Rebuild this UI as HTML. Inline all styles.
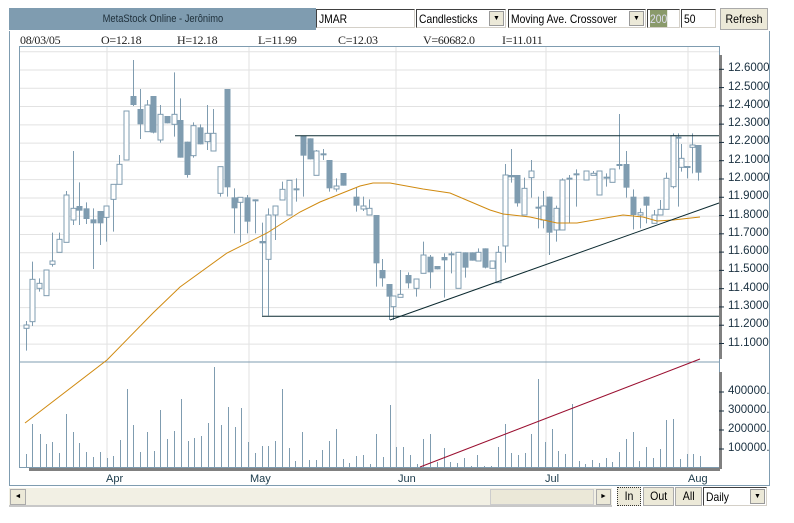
<!DOCTYPE html>
<html><head><meta charset="utf-8"><style>
body{margin:0;width:794px;height:523px;overflow:hidden;background:#fff;font-family:"Liberation Sans",sans-serif;position:relative}
.abs{position:absolute}
.hdr{left:9px;top:8px;width:307px;height:22px;background:#7f9cb0;color:#1e2f3a;font-size:11px;line-height:22px;text-align:center}
.hdr span{display:inline-block;transform:scaleX(.85)}
.inp{top:9px;height:19px;background:#fff;border-top:1px solid #404040;border-left:1px solid #404040;border-bottom:1px solid #d4d0c8;border-right:1px solid #d4d0c8;font-size:12px;line-height:19px;padding-left:2px;box-sizing:border-box;color:#000;overflow:hidden;white-space:nowrap}
.inp span.t{display:inline-block;transform:scaleX(.86);transform-origin:left}
.sel .ar{position:absolute;right:1px;top:1px;width:15px;height:15px;background:#ece9d8;border:1px solid #999;box-sizing:border-box;font-size:7px;line-height:14px;text-align:center}
.btn{background:#ece9d8;border:1px solid #aaa;box-sizing:border-box;font-size:12px;text-align:center;color:#000}
.btn span{display:inline-block;transform:scaleX(.88)}
.info{top:33px;font-family:"Liberation Serif",serif;font-size:12px;color:#222;letter-spacing:-.3px}
.pl{font-size:11.5px;color:#1a3040;left:728px}
.ml{font-size:11px;color:#1a3a4a;top:473px}
</style></head><body>
<div class="abs hdr"><span>MetaStock Online - Jerônimo</span></div>
<div class="abs inp" style="left:316px;width:99px"><span class="t">JMAR</span></div>
<div class="abs inp sel" style="left:416px;width:90px"><span class="t">Candlesticks</span><div class="ar">▼</div></div>
<div class="abs inp sel" style="left:508px;width:138px"><span class="t">Moving Ave. Crossover</span><div class="ar">▼</div></div>
<div class="abs inp" style="left:647px;width:33px"><span class="t" style="background:#8a9a6a;color:#dde">200</span></div>
<div class="abs inp" style="left:681px;width:35px"><span class="t">50</span></div>
<div class="abs btn" style="left:720px;top:8px;width:48px;height:22px;line-height:20px"><span>Refresh</span></div>
<div class="abs" style="left:9px;top:31px;width:759px;height:454px;border-left:1px solid #7f9cb0;border-right:1px solid #7f9cb0;border-bottom:1px solid #7f9cb0"></div>
<div class="abs info" style="left:20px">08/03/05</div>
<div class="abs info" style="left:101px">O=12.18</div>
<div class="abs info" style="left:177px">H=12.18</div>
<div class="abs info" style="left:258px">L=11.99</div>
<div class="abs info" style="left:338px">C=12.03</div>
<div class="abs info" style="left:423px">V=60682.0</div>
<div class="abs info" style="left:502px">I=11.011</div>
<svg class="abs" style="left:0;top:0" width="794" height="523" id="s"></svg>
<div id="labels"></div>
<div class="abs ml" style="left:106px">Apr</div>
<div class="abs ml" style="left:250px">May</div>
<div class="abs ml" style="left:398px">Jun</div>
<div class="abs ml" style="left:545px">Jul</div>
<div class="abs ml" style="left:688px">Aug</div>
<div class="abs" style="left:9px;top:488px;width:603px;height:17px;background:#f2f0e4;border-bottom:2px solid #c8c8c8"></div>
<div class="abs btn" style="left:10px;top:489px;width:16px;height:16px;font-size:7px;line-height:14px">◄</div>
<div class="abs" style="left:490px;top:489px;width:104px;height:16px;background:#ebe8d8;border:1px solid #ccc;box-sizing:border-box"></div>
<div class="abs btn" style="left:596px;top:489px;width:15px;height:16px;font-size:7px;line-height:14px">►</div>
<div class="abs btn" style="left:617px;top:487px;width:24px;height:19px;line-height:17px;border:1px dotted #333"><span>In</span></div>
<div class="abs btn" style="left:643px;top:487px;width:31px;height:19px;line-height:17px"><span>Out</span></div>
<div class="abs btn" style="left:675px;top:487px;width:27px;height:19px;line-height:17px"><span>All</span></div>
<div class="abs inp sel" style="left:703px;top:487px;width:64px;height:19px"><span class="t">Daily</span><div class="ar">▼</div></div>
<script>
var s=document.getElementById('s'),h='';
function L(x1,y1,x2,y2,c,w){h+='<line x1="'+x1+'" y1="'+y1+'" x2="'+x2+'" y2="'+y2+'" stroke="'+c+'" stroke-width="'+(w||1)+'"/>';}
for(var i=0;i<17;i++){var y=51.7+i*18.28;L(20,y,719,y,'#e2e2e2');}
[107,249,396,546,688].forEach(function(x){L(x,46,x,470,'#e2e2e2');});
h+='<rect x="19.5" y="46.5" width="700" height="421" fill="none" stroke="#7f9cb0"/>';
L(19,362,720,362,'#7f9cb0');
h+='<rect x="29" y="468" width="691" height="3" fill="#808080"/>';
h+='<rect x="719" y="55" width="3" height="304" fill="#808080"/><rect x="719" y="372" width="3" height="97" fill="#808080"/>';
var lb='';var pr=['12.6000','12.5000','12.4000','12.3000','12.2000','12.1000','12.0000','11.9000','11.8000','11.7000','11.6000','11.5000','11.4000','11.3000','11.2000','11.1000'];
pr.forEach(function(p,i){var y=69.3+i*18.28;L(719,y,724,y,'#1a3040');lb+='<div class="abs pl" style="top:'+(y-7)+'px">'+p+'</div>';});
['400000.','300000.','200000.','100000.'].forEach(function(p,i){var y=392+i*19;L(719,y,724,y,'#1a3040');lb+='<div class="abs pl" style="top:'+(y-7)+'px">'+p+'</div>';});
document.getElementById('labels').innerHTML=lb;
var v5=[79,297,97,207,119,237,139,267,157,261,178,294,199,177,220,231,238,264,259,291,280,306,301,291,320,309,340,303,361,255,382,102,400,210,421,291,442,231,463,288,481,165,502,252,523,228,544,132,563,258,583,249,604,243,625,204,643,36,664,210,685,156,706,216,724,159,745,261,766,294,787,273,805,273,826,258,847,102,868,279,886,318,907,231,928,315,949,315,967,285,988,258,1009,222,1030,312,1048,324,1069,303,1090,300,1111,327,1129,237,1150,306,1171,150,1189,276];
for(var i=0;i<v5.length;i+=2){var x=Math.round(v5[i]/3)+.5;L(x,355+v5[i+1]/3,x,467,'#7f9cb0');}
var v6=[10,276,31,300,52,327,70,252,91,237,112,321,133,279,151,321,172,324,193,309,214,333,232,300,253,333,274,333,295,276,314,207,334,294,355,300,376,294,394,237,415,72,436,261,457,222,475,288,496,297,517,147,538,318,556,327,577,315,598,324,619,309,637,321,658,291,679,252,700,231,718,318,739,276,760,309,781,282,799,195,820,192,841,312,862,297,880,297,901,303];
for(var i=0;i<v6.length;i+=2){var x=Math.round(400+v6[i]/3)+.5;L(x,355+v6[i+1]/3,x,467,'#7f9cb0');}
var c=[[26,855,865,843,932,0],[32,718,845,665,858,0],[39,730,745,715,755,0],[46,690,767,690,767,0],[52,663,673,578,680,0],[59,598,637,578,637,0],[66,465,607,453,607,0],[73,505,540,333,555,0],[79,498,512,427,555,1],[86,505,537,487,552,1],[93,538,550,505,687,1],[100,513,550,513,615,1],[106,498,532,498,605,0],[113,433,478,433,575,0],[119,373,433,345,433,0],[126,213,360,213,360,0],[133,168,195,60,198,1],[140,207,253,147,297,1],[147,195,275,180,275,0],[153,168,278,168,280,1],[160,223,300,195,308,0],[167,228,250,228,250,1],[174,223,253,97,290,0],[180,240,353,175,353,1],[187,305,405,305,413,1],[193,257,347,247,353,0],[200,262,313,253,313,1],[207,280,305,195,330,0],[213,280,333,207,333,0],[220,380,460,380,470,0],[227,147,442,147,470,1],[234,472,505,445,580,1],[240,472,487,472,608,0],[247,472,545,465,580,1],[255,478,480,478,580,1],[262,603,610,548,827,1],[268,525,658,505,827,0],[275,498,525,498,600,0],[282,448,480,425,480,0],[289,421,525,421,527,0],[296,445,447,415,485,1],[303,287,347,287,470,1],[310,295,358,295,358,1],[316,333,406,330,406,0],[323,340,342,327,360,1],[329,360,445,360,455,1],[336,438,447,415,455,0],[343,399,437,399,437,1],[356,470,497,443,515,1],[363,498,507,470,513,0],[369,505,525,478,525,0],[376,525,670,525,740,1],[382,690,715,657,740,1],[389,732,770,732,840,1]];
var c2=[[393,768,800,768,840,0],[400,763,772,690,772,0],[408,705,730,697,745,1],[416,717,745,717,770,0],[423,645,700,605,700,0],[430,650,697,645,745,1],[437,678,688,678,688,1],[444,651,661,640,773,1],[451,640,642,635,700,1],[458,637,745,637,745,0],[465,637,683,637,713,1],[472,637,662,637,662,1],[478,637,663,625,663,0],[485,625,683,625,685,1],[492,663,685,663,685,0],[498,637,728,618,728,0],[505,405,618,372,668,0],[511,405,412,327,428,1],[517,405,490,405,500,1],[524,445,525,413,525,0],[531,393,413,360,473,0],[538,500,502,470,565,1],[543,498,540,453,565,0],[549,470,578,470,645,1],[556,505,570,497,605,0],[562,420,570,415,570,0],[569,413,418,405,550,1],[576,400,402,388,500,1],[586,393,420,393,420,0],[593,400,405,393,405,0],[599,393,465,393,465,0],[606,410,412,400,440,1],[612,387,427,387,427,0],[619,372,378,222,388,1],[626,372,443,333,473,1],[633,470,525,448,568,1],[640,518,525,505,565,0],[646,470,497,470,550,1],[654,525,550,510,550,0],[660,508,525,480,525,0],[666,415,508,398,508,0],[673,287,440,280,445,0],[678,290,292,280,500,1],[681,355,382,312,395,0],[687,378,380,378,415,1],[692,315,322,280,400,0],[698,315,398,315,422,1]];
function cd(a){var x=a[0]+.5,col='#7f9cb0';L(x,40+a[3]/3,x,40+a[4]/3,col);var t=40+a[1]/3,b=40+a[2]/3;if(b-t<2)b=t+2;
if(a[5])h+='<rect x="'+(x-3)+'" y="'+t+'" width="6" height="'+(b-t)+'" fill="'+col+'"/>';else h+='<rect x="'+(x-2.5)+'" y="'+t+'" width="5" height="'+(b-t)+'" fill="#fff" stroke="'+col+'"/>';}
c.forEach(cd);c2.forEach(cd);
h+='<polyline fill="none" stroke="#d08a10" stroke-width="1" points="25,423 107,360 153,313 180,287 227,253 267,233 300,212 320,202 360,186 373,183 390,183 423,189 450,193 490,210 503,214 530,217 557,223 577,223 623,215 643,217 657,221 673,220 700,217"/>';
L(295,135.7,719,135.7,'#0c2a30');L(262,316.3,719,316.3,'#0c2a30');L(390,320,719,203,'#0c2a30');
L(420,467,700,359,'#9a0f30');
s.innerHTML=h;
</script>
</body></html>
